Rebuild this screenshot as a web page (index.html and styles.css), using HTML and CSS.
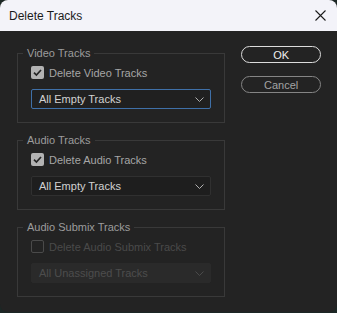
FILE: index.html
```html
<!DOCTYPE html>
<html lang="en">
  <head>
    <meta charset="UTF-8" />
    <title>Delete Tracks</title>
    <link rel="stylesheet" href="styles.css">
  </head>
  <body>
    <div class="window">
      <div class="titlebar">
        <span class="title">Delete Tracks</span>
        <svg class="close" width="11" height="11" viewBox="0 0 11 11">
          <path d="M0.5 0.5L10.5 10.5M10.5 0.5L0.5 10.5" stroke="#1b1b1b" stroke-width="1.1" />
        </svg>
      </div>
      <div class="content">
        <div class="groups">
          <fieldset class="group">
            <legend>Video Tracks</legend>
            <label class="check-row">
              <span class="box checked">
                <svg width="13" height="13" viewBox="0 0 13 13"><path d="M3 6.6L5.4 9L10 4" fill="none" stroke="#262626" stroke-width="1.7" /></svg>
              </span>
              Delete Video Tracks
            </label>
            <div class="select focused">
              <span>All Empty Tracks</span>
              <svg width="9" height="5" viewBox="0 0 9 5"><path d="M0.5 0.5L4.5 4.5L8.5 0.5" fill="none" stroke="#b0b0b0" /></svg>
            </div>
          </fieldset>
          <fieldset class="group">
            <legend>Audio Tracks</legend>
            <label class="check-row">
              <span class="box checked">
                <svg width="13" height="13" viewBox="0 0 13 13"><path d="M3 6.6L5.4 9L10 4" fill="none" stroke="#262626" stroke-width="1.7" /></svg>
              </span>
              Delete Audio Tracks
            </label>
            <div class="select">
              <span>All Empty Tracks</span>
              <svg width="9" height="5" viewBox="0 0 9 5"><path d="M0.5 0.5L4.5 4.5L8.5 0.5" fill="none" stroke="#b0b0b0" /></svg>
            </div>
          </fieldset>
          <fieldset class="group disabled">
            <legend>Audio Submix Tracks</legend>
            <label class="check-row">
              <span class="box"></span>
              Delete Audio Submix Tracks
            </label>
            <div class="select">
              <span>All Unassigned Tracks</span>
              <svg width="9" height="5" viewBox="0 0 9 5"><path d="M0.5 0.5L4.5 4.5L8.5 0.5" fill="none" stroke="#4a4a4a" /></svg>
            </div>
          </fieldset>
        </div>
        <div class="buttons">
          <button class="btn btn-primary">OK</button>
          <button class="btn">Cancel</button>
        </div>
      </div>
    </div>
  </body>
</html>
```

FILE: styles.css
```css
* {
  box-sizing: border-box;
}
body {
  margin: 0;
  background-color: #1c2725;
  font-family: "Liberation Sans", Arial, sans-serif;
}
.window {
  width: 337px;
  height: 312px;
  border-radius: 8px;
  overflow: hidden;
  background-color: #232323;
}
.titlebar {
  height: 31px;
  display: flex;
  align-items: center;
  justify-content: space-between;
  padding: 0 11px 0 9px;
  background-color: #f3f3f9;
}
.title {
  font-size: 12px;
  color: #1b1b1b;
}
.content {
  display: flex;
  gap: 16px;
  padding: 15px 16px 0 17px;
}
.groups {
  width: 209px;
  display: flex;
  flex-direction: column;
  gap: 10px;
}
.group {
  margin: 0;
  min-width: 0;
  padding: 6px 13px 13px;
  border: 1px solid #393939;
}
.group legend {
  margin-left: -8px;
  padding: 0 4px;
  font-size: 11px;
  line-height: 14px;
  color: #9c9c9c;
}
.check-row {
  display: flex;
  align-items: center;
  gap: 5px;
  height: 13px;
  font-size: 11px;
  color: #a6a6a6;
}
.box {
  width: 13px;
  height: 13px;
  border-radius: 2px;
  border: 1px solid #4a4a4a;
}
.box.checked {
  border: none;
  background-color: #b3b3b3;
}
.box svg {
  display: block;
}
.select {
  margin-top: 10px;
  height: 20px;
  display: flex;
  align-items: center;
  justify-content: space-between;
  padding: 0 6px 0 7px;
  border: 1px solid #303030;
  border-radius: 2px;
  background-color: #1e1e1e;
  font-size: 11px;
  color: #d2d2d2;
}
.select.focused {
  border-color: #3f70a8;
  background-color: #202020;
}
.disabled .check-row {
  color: #4a4a4a;
}
.disabled .select {
  border-color: #2a2a2a;
  background-color: #2a2a2a;
  color: #4d4d4d;
}
.buttons {
  width: 80px;
  display: flex;
  flex-direction: column;
  gap: 13px;
}
.btn {
  height: 17px;
  padding: 0;
  border: 1px solid #858585;
  border-radius: 9px;
  background: none;
  font-family: inherit;
  font-size: 11px;
  color: #a3a3a3;
}
.btn-primary {
  border: 1.5px solid #dcdcdc;
  color: #f0f0f0;
}
```
